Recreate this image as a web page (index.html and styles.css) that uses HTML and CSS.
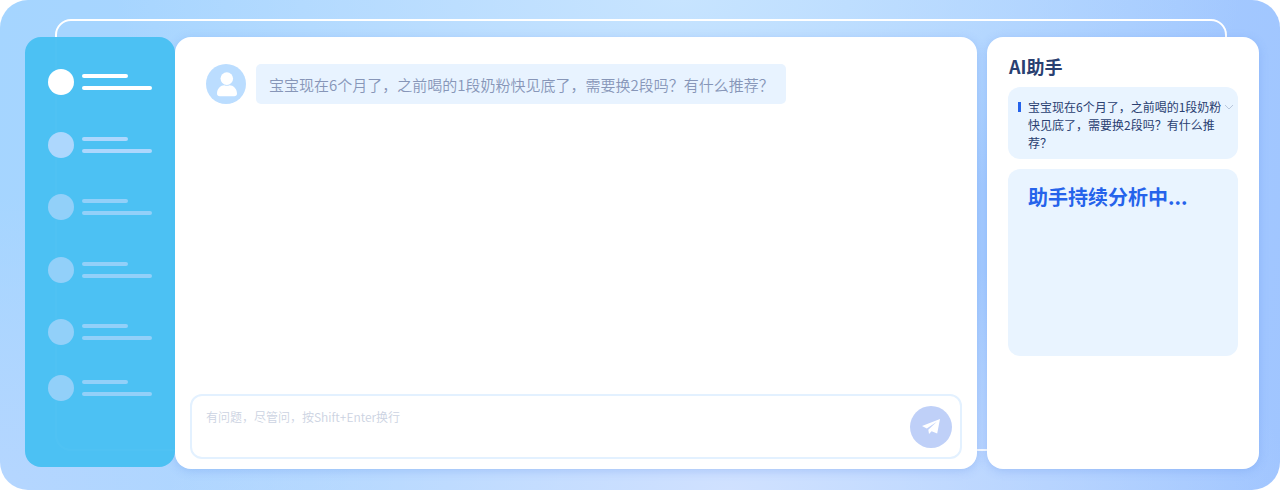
FILE: index.html
```html
<!DOCTYPE html>
<html lang="zh-CN">
<head>
<meta charset="utf-8">
<meta name="viewport" content="width=device-width, initial-scale=1">
<title>AI助手</title>
<link rel="stylesheet" href="styles.css">
</head>
<body>
<div class="stage">
  <div class="frame"></div>
  <nav class="sidebar">
    <ul class="contacts">
      <li class="contact contact-active"><span class="dot"></span><span class="lines"><i class="line line-short"></i><i class="line"></i></span></li>
      <li class="contact contact-recent"><span class="dot"></span><span class="lines"><i class="line line-short"></i><i class="line"></i></span></li>
      <li class="contact"><span class="dot"></span><span class="lines"><i class="line line-short"></i><i class="line"></i></span></li>
      <li class="contact"><span class="dot"></span><span class="lines"><i class="line line-short"></i><i class="line"></i></span></li>
      <li class="contact"><span class="dot"></span><span class="lines"><i class="line line-short"></i><i class="line"></i></span></li>
      <li class="contact"><span class="dot"></span><span class="lines"><i class="line line-short"></i><i class="line"></i></span></li>
    </ul>
  </nav>
  <main class="chat">
    <div class="message">
      <svg class="avatar" viewBox="0 0 40 40" aria-hidden="true">
        <circle cx="20" cy="20" r="20" fill="#bbddff"/>
        <circle cx="20.8" cy="14.6" r="6.3" fill="#fff"/>
        <path d="M11 29.500C11 24.500 15 21.400 18.200 21.300C20 22 21.800 22 23.600 21.300C27 21.400 31 24.500 31 29.500C31 31.300 30 32.200 28.200 32.200H13.800C12 32.200 11 31.300 11 29.500Z" fill="#fff"/>
      </svg>
      <p class="bubble">宝宝现在6个月了，之前喝的1段奶粉快见底了，需要换2段吗？有什么推荐？</p>
    </div>
    <form class="composer">
      <textarea class="input" aria-label="输入消息" placeholder="有问题，尽管问，按Shift+Enter换行"></textarea>
      <button class="send" type="button" aria-label="发送">
        <svg class="send-icon" viewBox="0 0 18 15" aria-hidden="true">
          <path d="M18 0L0 7L4.800 9.400L14.800 2.800L6.300 10.800L7 15L9.600 12.200L15.200 14.500Z" fill="#fff"/>
        </svg>
      </button>
    </form>
  </main>
  <aside class="assistant">
    <h1 class="title">AI助手</h1>
    <section class="question">
      <span class="marker"></span>
      <p class="question-text">宝宝现在6个月了，之前喝的1段奶粉快见底了，需要换2段吗？有什么推荐？</p>
      <button class="toggle" type="button" aria-label="展开">
        <svg class="chevron" viewBox="0 0 10 6" aria-hidden="true"><path d="M1 1L5 5L9 1" fill="none" stroke="#b9c7dc"/></svg>
      </button>
    </section>
    <section class="analysis">
      <p class="status">助手持续分析中...</p>
    </section>
  </aside>
</div>
</body>
</html>
```
FILE: styles.css
```css
* {
  box-sizing: border-box;
}

body {
  margin: 0;
  background: #fff;
  font-family: "Noto Sans CJK SC", sans-serif;
}

p,
h1,
ul {
  margin: 0;
  padding: 0;
}

button {
  padding: 0;
  border: 0;
  background: none;
}

.stage {
  position: relative;
  display: flex;
  min-height: 100vh;
  padding: 37px 21px 21px 25px;
  border-radius: 28px;
  background:
    radial-gradient(ellipse 44% 45% at 53% 0%, #c7e4ff, #c7e4ff00),
    radial-gradient(ellipse 44% 50% at 57% 100%, #d0e1ff, #d0e1ff00),
    radial-gradient(ellipse 30% 60% at 0% 100%, #b5d6ff, #b5d6ff00),
    linear-gradient(100deg, #a5d5ff 0%, #add5ff 45%, #a0c5ff 100%);
}

/* Decorative outline behind the panels */
.frame {
  position: absolute;
  inset: 19px 53px 39px 55px;
  border: 2px solid #fff;
  border-radius: 16px;
}

.sidebar {
  position: relative;
  z-index: 1;
  flex: 0 0 150px;
  margin-bottom: 2px;
  padding: 32px 23px;
  border-radius: 16px;
  background: #48bff3f5;
}

.contacts {
  list-style: none;
}

.contact {
  display: flex;
  align-items: center;
  gap: 8px;
  height: 26px;
  margin-top: 36px;
  color: #92d0f9;
}

.contact:nth-child(even) {
  margin-top: 37px;
}

.contact:first-child {
  margin-top: 0;
}

.contact:last-child {
  margin-top: 30px;
}

.contact-active {
  color: #fff;
}

.contact-recent {
  color: #add7fd;
}

.dot {
  flex: none;
  width: 26px;
  height: 26px;
  border-radius: 50%;
  background: currentColor;
}

.lines {
  display: grid;
  gap: 8px;
}

.line {
  width: 70px;
  height: 4px;
  border-radius: 2px;
  background: currentColor;
}

.line-short {
  width: 46px;
}

.chat,
.assistant {
  position: relative;
  border-radius: 16px;
  background: #fff;
  box-shadow: 0 2px 10px #5d8fe84d;
}

.chat {
  display: flex;
  flex: 1;
  flex-direction: column;
  justify-content: space-between;
  min-width: 0;
  padding: 27px 15px 10px;
}

.message {
  display: flex;
  align-items: flex-start;
  gap: 10px;
  padding: 0 16px;
}

.avatar {
  flex: none;
  width: 40px;
  height: 40px;
}

.bubble {
  padding: 10px 12px 8px 13px;
  border-radius: 5px;
  background: #e8f3ff;
  color: #8796b8;
  font-size: 15px;
  font-weight: 350;
  line-height: 22px;
}

.composer {
  display: flex;
  align-items: center;
  min-height: 65px;
  padding: 0 8px 0 14px;
  border: 2px solid #e3f1ff;
  border-radius: 12px;
}

.input {
  flex: 1;
  height: 38px;
  padding: 0;
  border: 0;
  outline: 0;
  background: none;
  resize: none;
  font: 350 12px/18px "Noto Sans CJK SC", sans-serif;
}

.input::placeholder {
  color: #ccd3e2;
}

.send {
  display: grid;
  place-items: center;
  width: 42px;
  height: 42px;
  border-radius: 50%;
  background: #bfd0f8;
}

.send-icon {
  width: 18px;
  height: 15px;
}

.assistant {
  display: flex;
  flex: 0 0 272px;
  flex-direction: column;
  gap: 10px;
  margin-left: 10px;
  padding: 18px 21px;
}

.title {
  padding-left: 1px;
  color: #2a4071;
  font-size: 18px;
  font-weight: 700;
  line-height: 22px;
}

.question {
  display: flex;
  align-items: flex-start;
  min-height: 72px;
  padding: 11px 4px 7px 10px;
  border-radius: 12px;
  background: #e9f4ff;
}

.marker {
  flex: none;
  width: 3px;
  height: 10px;
  margin: 4px 7px 0 0;
  background: #2563eb;
}

.question-text {
  flex: 1;
  color: #2a4071;
  font-size: 12px;
  line-height: 18px;
}

.toggle,
.chevron {
  display: block;
  width: 10px;
}

.toggle {
  height: 18px;
}

.chevron {
  height: 6px;
  margin: auto;
}

.analysis {
  min-height: 187px;
  padding: 13px 20px;
  border-radius: 12px;
  background: #e9f4ff;
}

.status {
  color: #2563eb;
  font-size: 20px;
  font-weight: 700;
  line-height: 30px;
}
```
